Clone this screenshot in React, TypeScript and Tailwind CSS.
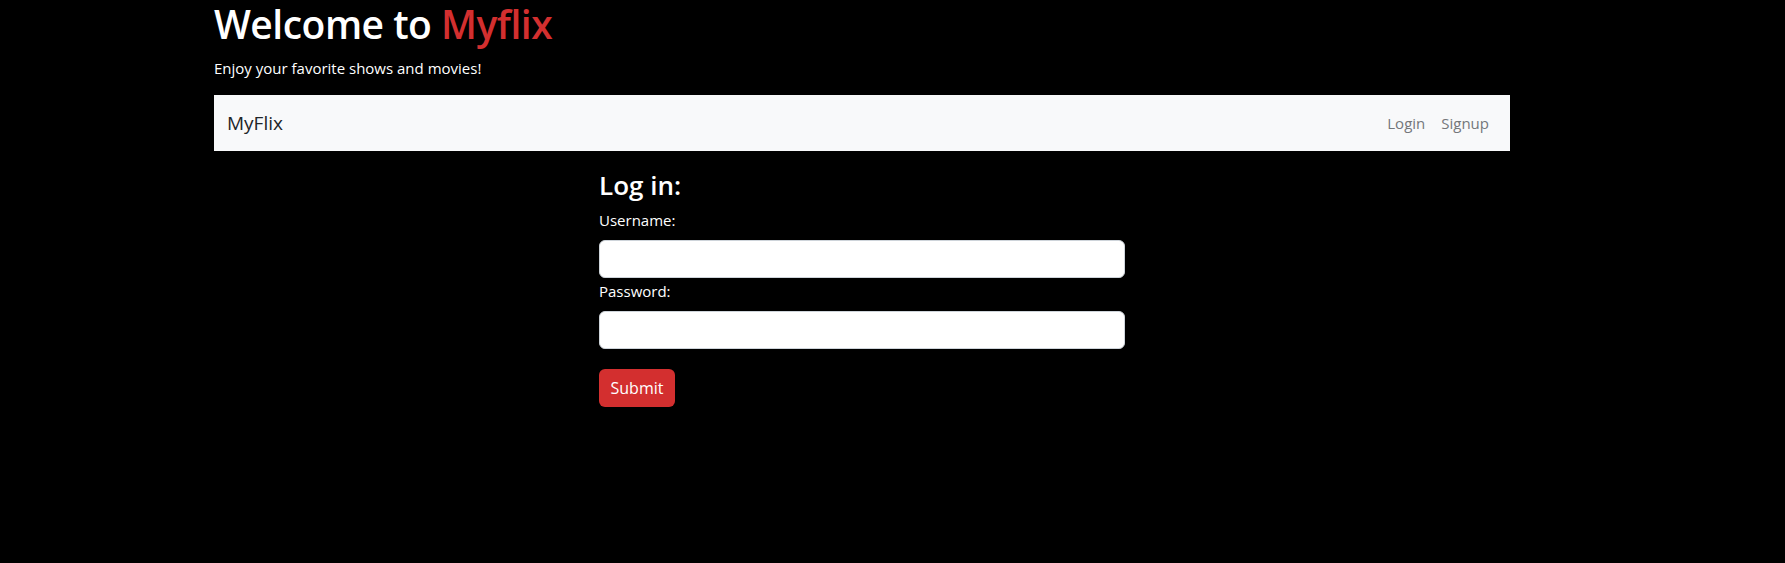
import React from "react";

export default function App() {
  return (
    <div className="min-h-[563px] w-full bg-black text-white" style={{ fontFamily: '"Open Sans", "Noto Sans", sans-serif' }}>
      <div className="ml-[214px] w-[1296px]">
        <h1 className="text-[39px] leading-[48px] font-semibold mb-2 tracking-[-0.5px]">
          Welcome to <span className="text-[#d32f2f]">Myflix</span>
        </h1>
        <p className="text-[15px] leading-[24px] mb-[15px]">Enjoy your favorite shows and movies!</p>
        <nav className="h-[56px] bg-[#f8f9fa] flex items-center justify-between pl-[13px] pr-[21px]">
          <span className="text-[19px] text-[#212529]">MyFlix</span>
          <div className="flex gap-[16px] text-[15px] text-[#74777a]">
            <span>Login</span>
            <span>Signup</span>
          </div>
        </nav>
        <div className="ml-[385px] w-[526px] pt-[17px]">
          <h3 className="text-[26px] leading-[34px] font-semibold mb-[6px]">Log in:</h3>
          <form>
            <label className="block text-[15px] leading-[24px] mb-[8px]">Username:</label>
            <input type="text" className="block w-full h-[38px] bg-white rounded-[6px] border border-[#ced4da]" />
            <label className="block text-[15px] leading-[24px] mb-[8px] mt-[1px]">Password:</label>
            <input type="password" className="block w-full h-[38px] bg-white rounded-[6px] border border-[#ced4da]" />
            <button type="button" className="mt-[20px] h-[38px] w-[76px] bg-[#d32f2f] rounded-[6px] text-[16px] text-white">Submit</button>
          </form>
        </div>
      </div>
    </div>
  );
}
